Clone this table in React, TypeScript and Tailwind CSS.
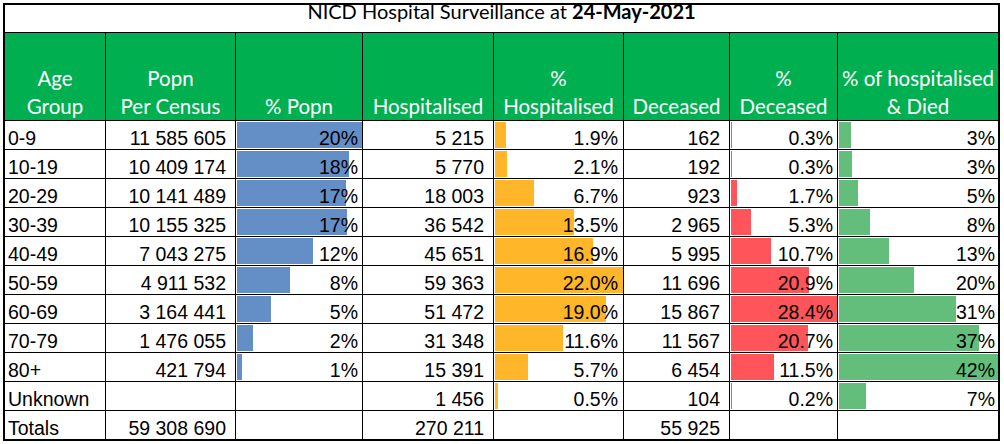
import React from "react";

type Row = {
  age: string;
  popn?: number;
  hosp: number;
  dec: number;
  pp?: string;
  ph: string;
  pd: string;
  phd: string;
};

const rows: Row[] = [
  { age: "0-9", popn: 11585605, hosp: 5215, dec: 162, pp: "20%", ph: "1.9%", pd: "0.3%", phd: "3%" },
  { age: "10-19", popn: 10409174, hosp: 5770, dec: 192, pp: "18%", ph: "2.1%", pd: "0.3%", phd: "3%" },
  { age: "20-29", popn: 10141489, hosp: 18003, dec: 923, pp: "17%", ph: "6.7%", pd: "1.7%", phd: "5%" },
  { age: "30-39", popn: 10155325, hosp: 36542, dec: 2965, pp: "17%", ph: "13.5%", pd: "5.3%", phd: "8%" },
  { age: "40-49", popn: 7043275, hosp: 45651, dec: 5995, pp: "12%", ph: "16.9%", pd: "10.7%", phd: "13%" },
  { age: "50-59", popn: 4911532, hosp: 59363, dec: 11696, pp: "8%", ph: "22.0%", pd: "20.9%", phd: "20%" },
  { age: "60-69", popn: 3164441, hosp: 51472, dec: 15867, pp: "5%", ph: "19.0%", pd: "28.4%", phd: "31%" },
  { age: "70-79", popn: 1476055, hosp: 31348, dec: 11567, pp: "2%", ph: "11.6%", pd: "20.7%", phd: "37%" },
  { age: "80+", popn: 421794, hosp: 15391, dec: 6454, pp: "1%", ph: "5.7%", pd: "11.5%", phd: "42%" },
  { age: "Unknown", hosp: 1456, dec: 104, ph: "0.5%", pd: "0.2%", phd: "7%" },
];

const totPopn = 59308690;
const totHosp = 270211;
const totDec = 55925;

const fmt = (n: number) => n.toString().replace(/\B(?=(\d{3})+(?!\d))/g, " ");

const maxPopn = Math.max(...rows.map((r) => (r.popn ?? 0) / totPopn));
const maxHosp = Math.max(...rows.map((r) => r.hosp / totHosp));
const maxDec = Math.max(...rows.map((r) => r.dec / totDec));
const maxHd = Math.max(...rows.map((r) => r.dec / r.hosp));

const cell =
  "relative flex items-end border-t border-black text-[19.5px] leading-[22px] text-black whitespace-nowrap";
const head =
  "flex flex-col items-center justify-end border-t border-l border-black bg-[#00B050] text-white text-[20.5px] leading-[28px] text-center whitespace-nowrap font-['Lato',sans-serif]";

function Bar({ frac, color }: { frac: number; color: string }) {
  return (
    <div className="absolute left-[1px] right-0 top-[1px] bottom-[1px]">
      <div className={`h-full ${color}`} style={{ width: `${frac * 100}%` }} />
    </div>
  );
}

function Num({ children, pr = "pr-[9px]" }: { children?: React.ReactNode; pr?: string }) {
  return <div className={`${cell} border-l justify-end ${pr}`}>{children}</div>;
}

function BarCell({ text, frac, color, pr }: { text?: string; frac?: number; color: string; pr: string }) {
  return (
    <div className={`${cell} border-l justify-end ${pr}`}>
      {frac !== undefined && <Bar frac={frac} color={color} />}
      <span className="relative">{text}</span>
    </div>
  );
}

export default function App() {
  return (
    <div className="w-[1004px] h-[444px] bg-white pt-[3px] pl-[3px]" style={{ fontFamily: "'Liberation Sans', Arial, sans-serif" }}>
      <div className="w-[997px] border-2 border-black grid grid-cols-[100px_130px_127px_131px_130px_106px_108px_161px] grid-rows-[27px_88px_repeat(11,29px)]">
        {/* title */}
        <div className="col-span-8 flex justify-center items-start font-['Lato',sans-serif] text-[20px] leading-[13px] text-black">
          <span>
            NICD Hospital Surveillance at <b>24-May-2021</b>
          </span>
        </div>

        {/* header */}
        <div className={`${head} border-l-0`}>
          <span>Age</span>
          <span>Group</span>
        </div>
        <div className={head}>
          <span>Popn</span>
          <span>Per Census</span>
        </div>
        <div className={head}>
          <span>% Popn</span>
        </div>
        <div className={head}>
          <span>Hospitalised</span>
        </div>
        <div className={head}>
          <span>%</span>
          <span>Hospitalised</span>
        </div>
        <div className={head}>
          <span>Deceased</span>
        </div>
        <div className={head}>
          <span>%</span>
          <span>Deceased</span>
        </div>
        <div className={head}>
          <span>% of hospitalised</span>
          <span>&amp; Died</span>
        </div>

        {/* data rows */}
        {rows.map((r) => (
          <React.Fragment key={r.age}>
            <div className={`${cell} pl-[3px]`}>{r.age}</div>
            <Num>{r.popn !== undefined ? fmt(r.popn) : ""}</Num>
            <BarCell
              text={r.pp}
              frac={r.popn !== undefined ? r.popn / totPopn / maxPopn : undefined}
              color="bg-[#638EC6]"
              pr="pr-[4px]"
            />
            <Num>{fmt(r.hosp)}</Num>
            <BarCell text={r.ph} frac={r.hosp / totHosp / maxHosp} color="bg-[#FFB628]" pr="pr-[5px]" />
            <Num>{fmt(r.dec)}</Num>
            <BarCell text={r.pd} frac={r.dec / totDec / maxDec} color="bg-[#FF555A]" pr="pr-[4px]" />
            <BarCell text={r.phd} frac={r.dec / r.hosp / maxHd} color="bg-[#63BE7B]" pr="pr-[3px]" />
          </React.Fragment>
        ))}

        {/* totals */}
        <div className={`${cell} pl-[3px]`}>Totals</div>
        <Num>{fmt(totPopn)}</Num>
        <Num />
        <Num>{fmt(totHosp)}</Num>
        <Num />
        <Num>{fmt(totDec)}</Num>
        <Num />
        <Num />
      </div>
    </div>
  );
}
